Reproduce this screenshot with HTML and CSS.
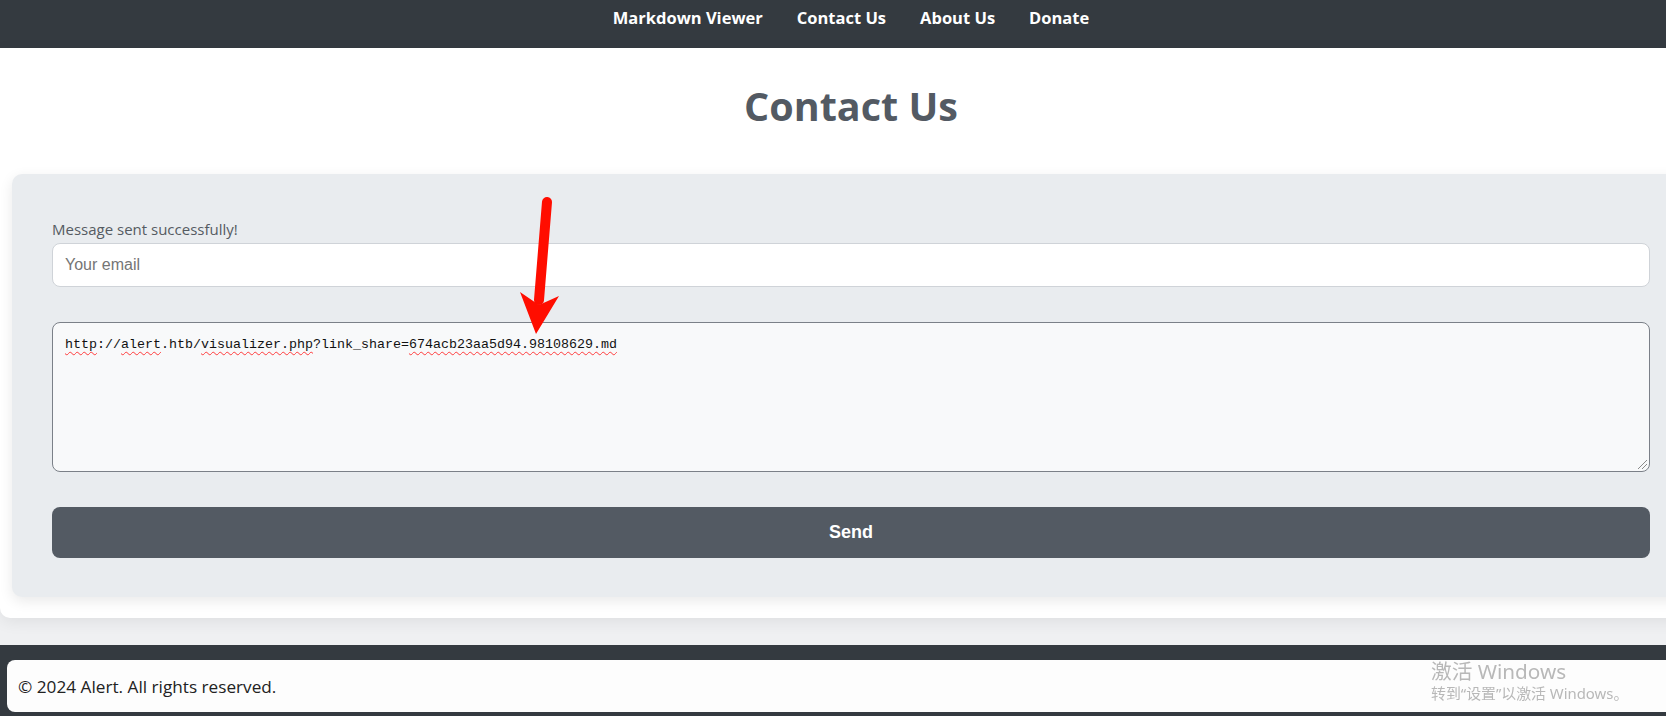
FILE: index.html
```html
<!DOCTYPE html>
<html lang="en">
<head>
<meta charset="utf-8">
<title>Contact Us</title>
<link rel="stylesheet" href="styles.css">
</head>
<body>
<nav class="topnav">
  <a class="nav-link" href="#">Markdown Viewer</a>
  <a class="nav-link" href="#">Contact Us</a>
  <a class="nav-link" href="#">About Us</a>
  <a class="nav-link" href="#">Donate</a>
</nav>
<main class="page">
  <h1 class="page-title">Contact Us</h1>
  <section class="card">
    <p class="status">Message sent successfully!</p>
    <input class="field" type="email" placeholder="Your email">
    <div class="message" role="textbox"><span class="spell">http</span>://<span class="spell">alert</span>.htb/<span class="spell">visualizer.php</span>?link_share=<span class="spell">674acb23aa5d94.98108629.md</span></div>
    <button class="send" type="button">Send</button>
  </section>
</main>
<footer class="footer">
  <div class="footer-box">© 2024 Alert. All rights reserved.</div>
</footer>
<svg class="arrow" width="80" height="160" viewBox="500 190 80 160" aria-hidden="true">
  <line x1="547" y1="202" x2="539" y2="300" stroke="#ff0d00" stroke-width="10" stroke-linecap="round"/>
  <polygon points="520,292 539,305 559,296 536,334" fill="#ff0d00"/>
</svg>
<div class="watermark">
  <div class="wm-title">激活 Windows</div>
  <div class="wm-sub">转到“设置”以激活 Windows。</div>
</div>
</body>
</html>
```
FILE: styles.css
```css
html, body {
  margin: 0;
  padding: 0;
  overflow: hidden;
  height: 716px;
}
body {
  background: #eff0f2;
  font-family: "Open Sans", "Noto Sans", sans-serif;
  position: relative;
}
.topnav {
  width: 1702px;
  height: 48px;
  box-sizing: border-box;
  background: #343a40;
  display: flex;
  justify-content: center;
  gap: 34px;
  padding: 8px 0 0 0;
}
.nav-link {
  color: #ffffff;
  text-decoration: none;
  font-weight: 700;
  font-size: 16.5px;
  line-height: 20px;
}
.page {
  width: 1702px;
  box-sizing: border-box;
  background: #ffffff;
  border-radius: 0 0 10px 10px;
  box-shadow: 0 4px 16px rgba(0, 0, 0, 0.07);
  padding: 0 12px 21px;
}
.page-title {
  margin: 0;
  padding: 34px 0 44px;
  line-height: 48px;
  font-size: 39.5px;
  font-weight: 700;
  color: #535a63;
  text-align: center;
}
.card {
  background: #e9ecef;
  border-radius: 10px;
  padding: 40px 40px 39px;
  box-shadow: 0 4px 14px rgba(0, 0, 0, 0.09);
  display: flex;
  flex-direction: column;
}
.status {
  margin: 5px 0 4px;
  font-size: 15px;
  line-height: 20px;
  color: #555b62;
}
.field {
  height: 44px;
  box-sizing: border-box;
  border: 1px solid #cfd3d8;
  border-radius: 8px;
  background: #ffffff;
  padding: 0 12px;
  font-family: "Liberation Sans", Arial, sans-serif;
  font-size: 16px;
  color: #333;
  outline: none;
  margin: 0;
}
.field::placeholder {
  color: #757575;
}
.message {
  margin-top: 35px;
  height: 150px;
  box-sizing: border-box;
  border: 1px solid #7b8088;
  border-radius: 8px;
  background: #f8f9fa;
  padding: 14px 12px;
  font-family: "Liberation Mono", "DejaVu Sans Mono", monospace;
  font-size: 13.33px;
  line-height: 16px;
  color: #111;
  position: relative;
}
.message::after {
  content: "";
  position: absolute;
  right: 2px;
  bottom: 2px;
  width: 9px;
  height: 9px;
  background: linear-gradient(135deg, transparent 45%, #8a8a8a 45%, #8a8a8a 52%, transparent 52%, transparent 70%, #8a8a8a 70%, #8a8a8a 77%, transparent 77%);
}
.spell {
  text-decoration: underline wavy #ff3b3b;
  text-decoration-thickness: 1px;
  text-underline-offset: 3px;
}
.send {
  margin-top: 35px;
  height: 51px;
  border: none;
  border-radius: 8px;
  background: #535a63;
  color: #ffffff;
  font-family: "Liberation Sans", Arial, sans-serif;
  font-weight: 700;
  font-size: 18px;
  padding: 0;
}
.footer {
  margin-top: 27px;
  width: 1702px;
  box-sizing: border-box;
  background: #343a40;
  padding: 15px 7px;
}
.footer-box {
  height: 52px;
  box-sizing: border-box;
  background: #fdfdfd;
  border-radius: 8px;
  padding-left: 11px;
  display: flex;
  align-items: center;
  font-size: 17.2px;
  color: #222;
}
.arrow {
  position: absolute;
  left: 500px;
  top: 190px;
}
.watermark {
  position: fixed;
  left: 1431px;
  top: 658px;
  color: #b8b8b8;
  font-family: "Noto Sans", "Noto Sans CJK SC", sans-serif;
}
.wm-title {
  font-size: 20.7px;
  line-height: 26px;
}
.wm-sub {
  font-size: 14.9px;
  line-height: 18px;
}
```
